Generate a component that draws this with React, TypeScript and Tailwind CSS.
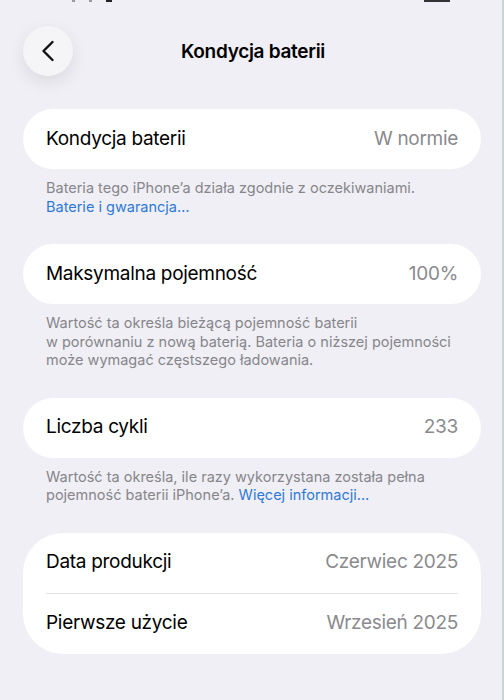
import React from 'react';

const font = { fontFamily: 'Inter, "Noto Sans", "Liberation Sans", sans-serif' };

interface RowProps {
    label: string;
    value: string;
}

const Row: React.FC<RowProps> = ({ label, value }) => (
    <div className="h-[60px] flex items-center justify-between px-[23px]">
        <span className="text-[19px] text-black tracking-[-0.3px]">{label}</span>
        <span className="text-[19px] text-[#8a8a8e] tracking-[-0.3px]">{value}</span>
    </div>
);

const Footer: React.FC<{ children: React.ReactNode }> = ({ children }) => (
    <p className="px-[23px] pt-[10px] text-[14.5px] leading-[18.5px] text-[#86868b]">{children}</p>
);

const Link: React.FC<{ children: React.ReactNode }> = ({ children }) => (
    <span className="text-[#2f7ad6]">{children}</span>
);

export default function App() {
    return (
        <div className="w-[504px] h-[700px] bg-[#f0eff5] overflow-hidden border-r-2 border-[#c9d6cf]" style={font}>
            {/* status bar remnants */}
            <div className="h-[3px] flex items-start">
                <div className="ml-[72px] flex gap-[14px]">
                    <span className="w-[3px] h-[2px] bg-[#9a9a9e]" />
                    <span className="w-[3px] h-[2px] bg-[#9a9a9e]" />
                    <span className="w-[6px] h-[2px] bg-[#222]" />
                </div>
                <span className="ml-auto mr-[52px] w-[26px] h-[2px] bg-[#333]" />
            </div>

            <div className="h-[96px] flex items-start pt-[26px] pl-[23px] pr-[21px] -mt-[3px]">
                <button className="w-[50px] h-[50px] rounded-full bg-[#f5f5f8] shadow-[0_6px_18px_rgba(0,0,0,0.09)] flex items-center justify-center">
                    <svg width="14" height="22" viewBox="0 0 14 22" fill="none">
                        <path d="M11.5 2 L2.5 11 L11.5 20" stroke="#111" strokeWidth="2.4" strokeLinecap="round" strokeLinejoin="round" />
                    </svg>
                </button>
                <h1 className="flex-1 h-[50px] pt-[2px] flex items-center justify-center text-[19px] font-semibold text-black tracking-[-0.3px] -ml-[48px] pointer-events-none">
                    Kondycja baterii
                </h1>
            </div>

            <div className="pl-[23px] pr-[21px] pt-[13px]">
                <div className="bg-white rounded-full">
                    <Row label="Kondycja baterii" value="W normie" />
                </div>
                <Footer>
                    Bateria tego iPhone’a działa zgodnie z oczekiwaniami.
                    <br />
                    <Link>Baterie i gwarancja…</Link>
                </Footer>

                <div className="bg-white rounded-full mt-[28px]">
                    <Row label="Maksymalna pojemność" value="100%" />
                </div>
                <Footer>
                    Wartość ta określa bieżącą pojemność baterii
                    <br />
                    w porównaniu z nową baterią. Bateria o niższej pojemności
                    <br />
                    może wymagać częstszego ładowania.
                </Footer>

                <div className="bg-white rounded-full mt-[28px]">
                    <Row label="Liczba cykli" value="233" />
                </div>
                <Footer>
                    Wartość ta określa, ile razy wykorzystana została pełna
                    <br />
                    pojemność baterii iPhone’a. <Link>Więcej informacji…</Link>
                </Footer>

                <div className="bg-white rounded-[40px] mt-[28px]">
                    <Row label="Data produkcji" value="Czerwiec 2025" />
                    <div className="mx-[23px] h-px bg-[#e3e3e6]" />
                    <Row label="Pierwsze użycie" value="Wrzesień 2025" />
                </div>
            </div>
        </div>
    );
}
